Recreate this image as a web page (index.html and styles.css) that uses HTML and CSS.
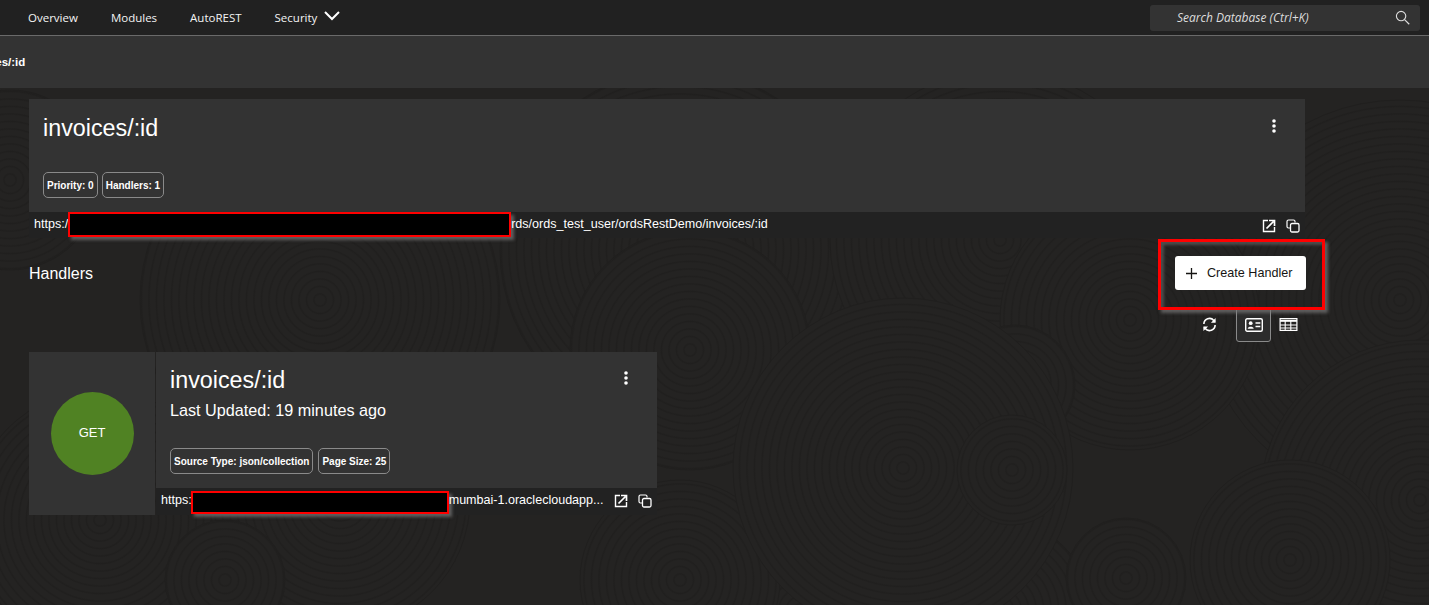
FILE: index.html
```html
<!DOCTYPE html>
<html lang="en">
<head>
<meta charset="utf-8">
<title>invoices/:id</title>
<link rel="stylesheet" href="styles.css">
</head>
<body>
<header class="topbar">
  <nav class="nav">
    <a class="nav-link">Overview</a>
    <a class="nav-link">Modules</a>
    <a class="nav-link">AutoREST</a>
    <a class="nav-link nav-menu">Security
      <svg class="chev" viewBox="0 0 16 10" width="16" height="10"><path d="M1 1l7 7 7-7" fill="none" stroke="#fff" stroke-width="2"/></svg>
    </a>
  </nav>
  <div class="search">
    <span class="search-text">Search Database (Ctrl+K)</span>
    <svg viewBox="0 0 16 16" width="15" height="15"><circle cx="6.500" cy="6.500" r="5" fill="none" stroke="#ddd" stroke-width="1.200"/><path d="M10.200 10.200l5 5" stroke="#ddd" stroke-width="1.300"/></svg>
  </div>
</header>
<div class="crumbbar"><span class="crumb">invoices/:id</span></div>
<main class="main">
  <section class="module">
    <div class="module-head">
      <div class="title-row">
        <h1 class="title">invoices/:id</h1>
        <svg class="kebab" viewBox="0 0 4 14" width="4" height="14"><circle cx="2" cy="2" r="1.800"/><circle cx="2" cy="7" r="1.800"/><circle cx="2" cy="12" r="1.800"/></svg>
      </div>
      <div class="chips"><span class="chip">Priority: 0</span><span class="chip">Handlers: 1</span></div>
    </div>
    <div class="url-row url-main">
      <span class="url">https:/<span class="redact redact-a"></span>rds/ords_test_user/ordsRestDemo/invoices/:id</span>
      <span class="url-icons">
        <svg viewBox="0 0 14 14" width="14" height="14"><path d="M6 1.500H1.500v11h11V8" fill="none" stroke="#fff" stroke-width="1.400"/><path d="M4.500 9.500L11.500 2.500M7 1.500h5.500V7" fill="none" stroke="#fff" stroke-width="1.700"/></svg>
        <svg viewBox="0 0 14 14" width="14" height="14"><path d="M9 3.500V2.500a1.500 1.500 0 0 0-1.500-1.500H2.500A1.500 1.500 0 0 0 1 2.500v5A1.500 1.500 0 0 0 2.500 9H4" fill="none" stroke="#fff" stroke-width="1.200"/><rect x="4.500" y="4.500" width="8.500" height="8.500" rx="1.500" fill="none" stroke="#fff" stroke-width="1.300"/></svg>
      </span>
    </div>
  </section>

  <div class="handlers-head">
    <h2 class="handlers-title">Handlers</h2>
    <div class="action-wrap">
      <button class="create-btn">
        <svg class="plus" viewBox="0 0 11 11" width="11" height="11"><path d="M5.500 0v11M0 5.500h11" stroke="#161513" stroke-width="1.300"/></svg>
        Create Handler
      </button>
      <span class="highlight"></span>
    </div>
  </div>

  <div class="toolbar">
    <svg class="tool-refresh" viewBox="0 0 16 16" width="15" height="15"><path d="M2 7.500A6 6 0 0 1 12.600 3.700L14 5M14 8.500A6 6 0 0 1 3.400 12.300L2 11" fill="none" stroke="#fff" stroke-width="1.700"/><path d="M14.500 1v5h-5zM1.500 15v-5h5z" fill="#fff"/></svg>
    <span class="toggle">
      <svg viewBox="0 0 18 14" width="18" height="14"><rect x=".7" y=".7" width="16.600" height="12.600" rx="1.500" fill="none" stroke="#fff" stroke-width="1.400"/><circle cx="5.700" cy="5.200" r="1.900" fill="#fff"/><path d="M2.700 10.800c.3-2.600 5.700-2.600 6 0z" fill="#fff"/><path d="M10.500 5h4.800M10.500 8.500h4.800" stroke="#fff" stroke-width="1.400"/></svg>
    </span>
    <svg class="tool-table" viewBox="0 0 18 13" width="19" height="13"><rect x=".6" y=".6" width="16.800" height="11.800" fill="none" stroke="#fff" stroke-width="1.200"/><path d="M.6 1.800h16.800v2H.6z" fill="#fff"/><path d="M.6 7h16.800M.6 10h16.800M5.700 3v9M11.300 3v9" stroke="#fff" stroke-width="1.100"/></svg>
  </div>

  <article class="handler">
    <div class="method"><span class="method-badge">GET</span></div>
    <div class="handler-body">
      <div class="handler-info">
        <div class="title-row">
          <div>
            <h3 class="title">invoices/:id</h3>
            <p class="updated">Last Updated: 19 minutes ago</p>
          </div>
          <svg class="kebab" viewBox="0 0 4 14" width="4" height="14"><circle cx="2" cy="2" r="1.800"/><circle cx="2" cy="7" r="1.800"/><circle cx="2" cy="12" r="1.800"/></svg>
        </div>
        <div class="chips handler-chips"><span class="chip">Source Type: json/collection</span><span class="chip">Page Size: 25</span></div>
      </div>
      <div class="url-row url-handler">
        <span class="url">https:<span class="redact redact-b"></span>mumbai-1.oraclecloudapp...</span>
        <span class="url-icons">
          <svg viewBox="0 0 14 14" width="14" height="14"><path d="M6 1.500H1.500v11h11V8" fill="none" stroke="#fff" stroke-width="1.400"/><path d="M4.500 9.500L11.500 2.500M7 1.500h5.500V7" fill="none" stroke="#fff" stroke-width="1.700"/></svg>
          <svg viewBox="0 0 14 14" width="14" height="14"><path d="M9 3.500V2.500a1.500 1.500 0 0 0-1.500-1.500H2.500A1.500 1.500 0 0 0 1 2.500v5A1.500 1.500 0 0 0 2.500 9H4" fill="none" stroke="#fff" stroke-width="1.200"/><rect x="4.500" y="4.500" width="8.500" height="8.500" rx="1.500" fill="none" stroke="#fff" stroke-width="1.300"/></svg>
        </span>
      </div>
    </div>
  </article>
</main>
</body>
</html>
```
FILE: styles.css
```css
* { box-sizing: border-box; }
html, body { margin: 0; height: 100%; }
body {
  overflow: hidden;
  color: #fff;
  font-family: "Liberation Sans", Arial, sans-serif;
  background-color: #242322;
  background-repeat: no-repeat;
  background-image: url("data:image/svg+xml,%3Csvg xmlns='http://www.w3.org/2000/svg' width='1429' height='605'%3E%3Cdefs%3E%3CradialGradient id='r' gradientUnits='userSpaceOnUse' cx='0' cy='0' r='7.500' spreadMethod='repeat'%3E%3Cstop offset='0' stop-color='%23242322'/%3E%3Cstop offset='.6' stop-color='%23242322'/%3E%3Cstop offset='.82' stop-color='%23201f1e'/%3E%3Cstop offset='1' stop-color='%23242322'/%3E%3C/radialGradient%3E%3C/defs%3E%3Cg fill='url(%23r)' stroke='%23201f1e'%3E%3Ccircle r='200' transform='translate(1400 300)'/%3E%3Ccircle r='180' transform='translate(320 300)'/%3E%3Ccircle r='180' transform='translate(680 250)'/%3E%3Ccircle r='170' transform='translate(1000 240)'/%3E%3Ccircle r='160' transform='translate(1420 500)'/%3E%3Ccircle r='130' transform='translate(1130 320)'/%3E%3Ccircle r='90' transform='translate(1000 610)'/%3E%3Ccircle r='100' transform='translate(800 610)'/%3E%3Ccircle r='120' transform='translate(690 350)'/%3E%3Ccircle r='130' transform='translate(100 520)'/%3E%3Ccircle r='130' transform='translate(340 500)'/%3E%3Ccircle r='100' transform='translate(1290 560)'/%3E%3Ccircle r='90' transform='translate(10 180)'/%3E%3Ccircle r='60' transform='translate(225 580)'/%3E%3Ccircle r='100' transform='translate(680 580)'/%3E%3Ccircle r='60' transform='translate(1015 385)'/%3E%3Ccircle r='170' transform='translate(903 468)'/%3E%3Ccircle r='60' transform='translate(1126 578)'/%3E%3Ccircle r='55' transform='translate(1012 470)'/%3E%3C/g%3E%3C/svg%3E");
}
.topbar {
  height: 36px;
  display: flex;
  align-items: center;
  justify-content: space-between;
  padding: 0 9px 1px 28px;
  background: #212121;
  border-bottom: 1px solid #6a6a6a;
}
.nav { display: flex; align-items: center; gap: 33px; }
.nav-link { font: 11.500px "Open Sans", sans-serif; color: #f4f4f4; }
.nav-menu { display: flex; align-items: center; gap: 7px; }
.chev { margin-top: -2px; }
.search {
  width: 270px;
  height: 26px;
  margin-top: 1px;
  display: flex;
  align-items: center;
  justify-content: space-between;
  padding: 0 10px 0 27px;
  background: #333;
  border-radius: 3px;
}
.search-text { font: italic 12px "Open Sans", sans-serif; color: #ddd; }
.crumbbar {
  height: 52px;
  display: flex;
  align-items: center;
  background: #333;
  overflow: hidden;
}
.crumb { margin-left: -38px; font-size: 11.500px; font-weight: 700; white-space: nowrap; }
.main { padding: 11px 124px 0 29px; }
.module-head { height: 113px; padding: 15px 29px 14px 14px; background: #333; display: flex; flex-direction: column; justify-content: space-between; }
.title-row { display: flex; justify-content: space-between; align-items: flex-start; }
.title { margin: 0; font-size: 23.300px; font-weight: 400; line-height: 28px; }
.kebab { fill: #fff; margin-top: 5px; }
.chips { display: flex; gap: 4px; }
.chip {
  height: 26px;
  display: flex;
  align-items: center;
  padding: 0 3px;
  font-size: 10px;
  font-weight: 700;
  border: 1px solid #8a8a8a;
  border-radius: 5px;
}
.url-row { display: flex; justify-content: space-between; align-items: flex-start; background: #222; }
.url { font-size: 12.550px; white-space: nowrap; display: flex; align-items: flex-start; }
.url-main { height: 26px; padding: 0 5px; }
.url-main .url { line-height: 24px; }
.url-main .url-icons { margin-top: 7px; }
.url-icons { display: flex; gap: 10px; }
.redact {
  display: block;
  background: #000;
  border: 2px solid #f00;
  box-shadow: 3px 3px 3px rgba(120,120,120,.7);
}
.redact-a { width: 443px; height: 25px; }
.redact-b { width: 258px; height: 23px; margin-left: -1px; }
.handlers-head { height: 70px; display: flex; justify-content: space-between; align-items: center; }
.handlers-title { margin: 2px 0 0; font-size: 16px; font-weight: 400; }
.action-wrap { position: relative; margin-right: -1px; }
.create-btn {
  height: 34px;
  width: 131px;
  display: flex;
  align-items: center;
  padding: 0 0 0 11px;
  font: 12.600px "Liberation Sans", sans-serif;
  color: #161513;
  background: #fff;
  border: 0;
  border-radius: 3px;
}
.plus { margin-right: 10px; }
.highlight {
  position: absolute;
  left: -17px;
  top: -17px;
  width: 167px;
  height: 71px;
  border: 3px solid #f00;
  box-shadow: 3px 3px 3px rgba(120,120,120,.7), inset 3px 3px 3px rgba(120,120,120,.5);
  pointer-events: none;
}
.toolbar { height: 35px; display: flex; justify-content: flex-end; align-items: center; margin-top: -1px; padding-right: 7px; }
.toggle {
  width: 35px;
  height: 35px;
  margin: 0 8px 0 19px;
  display: flex;
  align-items: center;
  justify-content: center;
  background: #2c2c2c;
  border: 1px solid #8a8a8a;
  border-radius: 3px;
}
.handler { margin-top: 10px; width: 628px; height: 163px; display: flex; }
.method { width: 126px; background: #333; display: flex; align-items: center; justify-content: center; }
.method-badge {
  width: 83px;
  height: 83px;
  padding-bottom: 2px;
  display: flex;
  align-items: center;
  justify-content: center;
  font-size: 13px;
  border-radius: 50%;
  background: #508223;
}
.handler-body { margin-left: 1px; flex: 1; display: flex; flex-direction: column; }
.handler-info { height: 136px; padding: 14px 29px 14px 14px; background: #333; display: flex; flex-direction: column; justify-content: space-between; }
.updated { margin: 7px 0 0; font-size: 16.200px; line-height: 18px; }
.handler-chips { gap: 5px; }
.url-handler { height: 27px; padding: 3px 5px 0; }
.url-handler .url { line-height: 19px; }
.url-handler .url-icons { margin-top: 3px; }
```
